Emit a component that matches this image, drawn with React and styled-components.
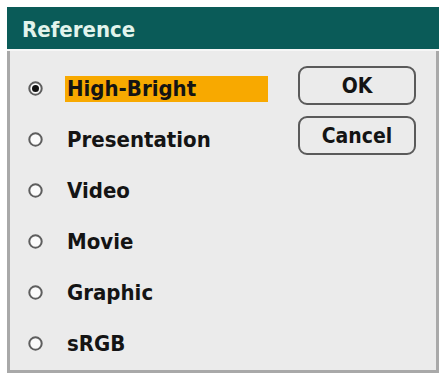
import styled, { createGlobalStyle } from 'styled-components'

const Global = createGlobalStyle`
  html, body {
    margin: 0;
    padding: 0;
    background: #ffffff;
  }
`

const Dialog = styled.div`
  position: relative;
  margin: 7px 0 0 7px;
  width: 432px;
  font-family: "DejaVu Sans Condensed", "DejaVu Sans", sans-serif;
  font-weight: bold;
`

const Header = styled.div`
  height: 44px;
  background: #0a5b58;
  color: #e2f4ec;
  font-size: 22px;
  display: flex;
  align-items: center;
  padding-left: 15px;
  padding-top: 2px;
  box-sizing: border-box;
  border-bottom: 2px solid #f6f6f6;
`

const Body = styled.div`
  display: flex;
  background: #ebebeb;
  border: 3px solid #a9a9a9;
  border-top: none;
  height: 322px;
  box-sizing: border-box;
`

const List = styled.div`
  display: flex;
  flex-direction: column;
  padding: 12px 0 0 18px;
`

const Row = styled.div`
  height: 51px;
  display: flex;
  align-items: center;
  gap: 22px;
`

const RadioIcon = styled.svg`
  flex-shrink: 0;
  width: 15px;
  height: 15px;
`

const Label = styled.span`
  width: 203px;
  height: 26px;
  display: flex;
  align-items: center;
  padding-left: 2px;
  box-sizing: border-box;
  font-size: 22px;
  color: #141414;
  background: ${p => (p.$active ? '#f8a900' : 'transparent')};
`

const Buttons = styled.div`
  display: flex;
  flex-direction: column;
  gap: 11px;
  padding: 15px 0 0 30px;
`

const Button = styled.div`
  width: 118px;
  height: 39px;
  box-sizing: border-box;
  border: 2px solid #5a5a5a;
  border-radius: 9px;
  display: flex;
  align-items: center;
  justify-content: center;
  font-size: 21px;
  color: #141414;
`

const Radio = ({ on }) => (
  <RadioIcon viewBox="0 0 15 15">
    <circle cx="7.5" cy="7.5" r="6.2" fill="#fbfbfb" stroke="#5e5e5e" strokeWidth="2" />
    {on && <circle cx="7.5" cy="7.5" r="3.5" fill="#111" />}
  </RadioIcon>
)

const modes = ['High-Bright', 'Presentation', 'Video', 'Movie', 'Graphic', 'sRGB']

export default function App() {
  return (
    <>
      <Global />
      <Dialog>
        <Header>Reference</Header>
        <Body>
          <List>
            {modes.map((m, i) => (
              <Row key={m}>
                <Radio on={i === 0} />
                <Label $active={i === 0}>{m}</Label>
              </Row>
            ))}
          </List>
          <Buttons>
            <Button>OK</Button>
            <Button>Cancel</Button>
          </Buttons>
        </Body>
      </Dialog>
    </>
  )
}
